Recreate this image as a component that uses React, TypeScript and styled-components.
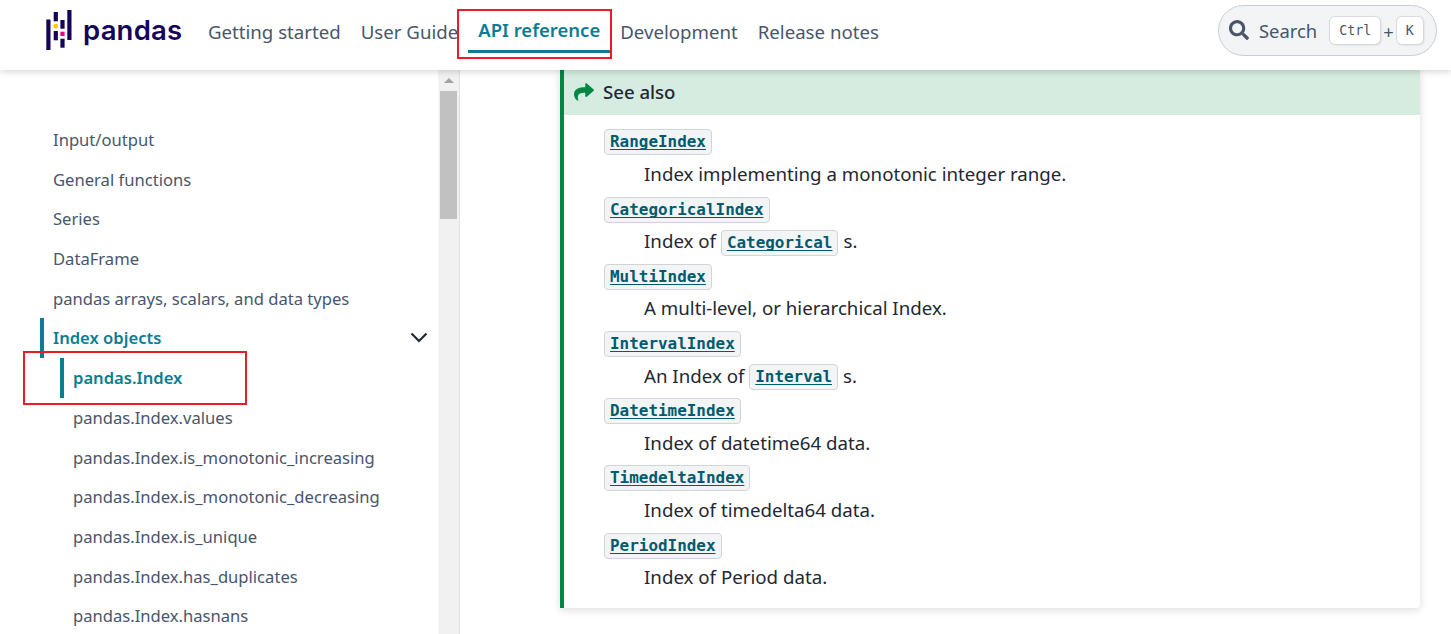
import * as React from 'react';
import styled, { createGlobalStyle } from 'styled-components';
import { FaSearch, FaShare } from 'react-icons/fa';

const GlobalStyle = createGlobalStyle`
    html, body {
        margin: 0;
        height: 100%;
        overflow: hidden;
        background: #fff;
        color: #222832;
        font-family: "Noto Sans", "Open Sans", sans-serif;
    }
`;

const Page = styled.div`
    height: 100vh;
    display: flex;
    flex-direction: column;
    overflow: hidden;
`;

const Header = styled.header`
    height: 70px;
    flex: none;
    display: flex;
    align-items: center;
    padding: 0 14px 0 46px;
    background: #fff;
    box-shadow: 0 2px 6px rgba(0, 0, 0, 0.16);
    position: relative;
    z-index: 2;
`;

const Logo = styled.div`
    display: flex;
    align-items: center;
    gap: 11px;
    width: 152px;
    height: 40px;
    margin-top: -10px;
    flex: none;
`;

const LogoText = styled.span`
    font-family: Inter, sans-serif;
    font-weight: 600;
    font-size: 27.5px;
    color: #150458;
    letter-spacing: 0.2px;
`;

const Nav = styled.nav`
    display: flex;
    align-items: center;
    margin-top: -6px;
    flex: 1;
`;

const NavItem = styled.a<{ $active?: boolean }>`
    position: relative;
    display: block;
    padding: ${p => (p.$active ? '0 10px 6px' : '0 10px')};
    font-size: ${p => (p.$active ? 18.5 : 18.65)}px;
    line-height: 28px;
    white-space: nowrap;
    font-weight: ${p => (p.$active ? 600 : 400)};
    color: ${p => (p.$active ? '#0a7d91' : '#48566b')};
    border-bottom: ${p => (p.$active ? '3px solid #0a7d91' : '0')};
    margin-top: ${p => (p.$active ? '5px' : '0')};
`;

const RedBox = styled.span<{ $top: number; $left: number; $w: number; $h: number }>`
    position: absolute;
    top: ${p => p.$top}px;
    left: ${p => p.$left}px;
    width: ${p => p.$w}px;
    height: ${p => p.$h}px;
    border: 2px solid #ed1c24;
    pointer-events: none;
`;

const SearchButton = styled.div`
    width: 219px;
    height: 51px;
    box-sizing: border-box;
    margin-top: -10px;
    display: flex;
    align-items: center;
    padding: 0 10px 0 10px;
    border: 1px solid #c9ced6;
    border-radius: 26px;
    background: #f3f4f5;
    color: #48566b;
    font-size: 18.4px;
`;

const SearchLabel = styled.span`
    margin-left: 10px;
    margin-right: 13px;
`;

const Kbd = styled.kbd`
    display: inline-flex;
    align-items: center;
    justify-content: center;
    box-sizing: border-box;
    height: 27px;
    padding: 0 9px;
    background: #fff;
    border-radius: 5px;
    box-shadow: 0 0 1px 1px #d5d9df, 1px 1px 2px rgba(0, 0, 0, 0.15);
    font-family: "DejaVu Sans Mono", monospace;
    font-size: 13.3px;
    color: #48566b;
`;

const Plus = styled.span`
    margin: 0 3px;
    font-size: 18.4px;
    padding-top: 3px;
`;

const Body = styled.div`
    flex: 1;
    display: flex;
    min-height: 0;
`;

const Sidebar = styled.aside`
    width: 460px;
    flex: none;
    box-sizing: border-box;
    border-right: 1px solid #dfe1e5;
    display: flex;
    overflow: hidden;
`;

const SideList = styled.ul`
    list-style: none;
    margin: 0;
    padding: 49.7px 0 0;
    width: 438px;
    flex: none;
`;

const SideItem = styled.li<{ $nested?: boolean; $active?: boolean }>`
    position: relative;
    height: 39.7px;
    display: flex;
    align-items: center;
    justify-content: space-between;
    box-sizing: border-box;
    padding-left: ${p => (p.$nested ? 73 : 53)}px;
    padding-right: 10px;
    font-size: 16.6px;
    font-weight: ${p => (p.$active ? 600 : 400)};
    color: ${p => (p.$active ? '#0a7d91' : '#48566b')};

    &::before {
        content: ${p => (p.$active ? "''" : 'none')};
        position: absolute;
        left: ${p => (p.$nested ? 60 : 40)}px;
        top: 0;
        bottom: 0;
        width: 4px;
        background: #0a7d91;
    }
`;

const Scrollbar = styled.div`
    width: 21px;
    flex: none;
    background: #f1f1f1;
    display: flex;
    flex-direction: column;
    align-items: center;
`;

const ScrollArrow = styled.div`
    height: 21px;
    flex: none;
    display: flex;
    align-items: center;
    justify-content: center;

    &::after {
        content: '';
        border-left: 5px solid transparent;
        border-right: 5px solid transparent;
        border-bottom: 5px solid #a3a3a3;
    }
`;

const ScrollThumb = styled.div`
    width: 17px;
    height: 128px;
    background: #c1c1c1;
`;

const Main = styled.main`
    flex: 1;
    min-width: 0;
    padding-left: 100px;
    padding-right: 31px;
`;

const Admonition = styled.section`
    border-left: 4px solid #028844;
    border-radius: 0 4px 4px 0;
    box-shadow: 0 2px 8px rgba(0, 0, 0, 0.14);
    padding-bottom: 12px;
`;

const AdmonitionTitle = styled.div`
    height: 45px;
    box-sizing: border-box;
    padding: 0 0 2px 10px;
    display: flex;
    align-items: center;
    gap: 9px;
    background: #d6ece1;
    font-size: 18.6px;
    font-weight: 500;
    color: #222832;

    svg {
        color: #028844;
    }
`;

const DefList = styled.dl`
    margin: 10.7px 0 0;
    padding-left: 40px;
`;

const Term = styled.dt`
    height: 33.6px;
    display: flex;
    align-items: center;
`;

const Desc = styled.dd`
    margin: 0 0 0 40px;
    height: 33.6px;
    box-sizing: border-box;
    padding-bottom: 5.2px;
    display: flex;
    align-items: center;
    font-size: 18.7px;
    white-space: pre;
`;

const Code = styled.code<{ $inline?: boolean }>`
    display: inline-block;
    box-sizing: border-box;
    height: 26px;
    line-height: 24px;
    padding: 0 5px;
    margin: ${p => (p.$inline ? '4px 5px 0 0' : '0')};
    background: #f3f4f5;
    border: 1px solid #d1d5da;
    border-radius: 4px;
    font-family: "DejaVu Sans Mono", monospace;
    font-size: 15.95px;
    font-weight: 700;
    color: #005b6e;
    text-decoration: underline;
    text-decoration-thickness: 1px;
    text-decoration-skip-ink: none;
    text-underline-offset: 2px;
`;

const sideItems = [
    'Input/output',
    'General functions',
    'Series',
    'DataFrame',
    'pandas arrays, scalars, and data types',
];

const nestedItems = [
    'pandas.Index.values',
    'pandas.Index.is_monotonic_increasing',
    'pandas.Index.is_monotonic_decreasing',
    'pandas.Index.is_unique',
    'pandas.Index.has_duplicates',
    'pandas.Index.hasnans',
];

function PandasLogo() {
    return (
        <svg width="26" height="40" viewBox="0 0 26 40" style={{ flex: 'none' }}>
            <rect x="0.3" y="9.5" width="4.2" height="30.5" fill="#150458" />
            <rect x="7.7" y="2" width="4.2" height="9.3" fill="#150458" />
            <rect x="7.7" y="14" width="4.2" height="4.3" fill="#ffca00" />
            <rect x="7.7" y="21" width="4.2" height="9.3" fill="#150458" />
            <rect x="14.4" y="10" width="4.2" height="8.7" fill="#150458" />
            <rect x="14.4" y="21.7" width="4.2" height="4.3" fill="#e70488" />
            <rect x="14.4" y="28.7" width="4.2" height="9" fill="#150458" />
            <rect x="21.3" y="0" width="4.2" height="30" fill="#150458" />
        </svg>
    );
}

function Chevron() {
    return (
        <svg width="18" height="11" viewBox="0 0 18 11" fill="none" stroke="#222832" strokeWidth="2.2">
            <polyline points="1.5,1.5 9,9 16.5,1.5" />
        </svg>
    );
}

export default function App() {
    return (
        <Page>
            <GlobalStyle />
            <Header>
                <Logo>
                    <PandasLogo />
                    <LogoText>pandas</LogoText>
                </Logo>
                <Nav>
                    <NavItem>Getting started</NavItem>
                    <NavItem>User Guide</NavItem>
                    <NavItem $active>
                        API reference
                        <RedBox $top={-7} $left={-11} $w={151} $h={46} />
                    </NavItem>
                    <NavItem>Development</NavItem>
                    <NavItem>Release notes</NavItem>
                </Nav>
                <SearchButton>
                    <FaSearch size={20} />
                    <SearchLabel>Search</SearchLabel>
                    <Kbd>Ctrl</Kbd>
                    <Plus>+</Plus>
                    <Kbd>K</Kbd>
                </SearchButton>
            </Header>
            <Body>
                <Sidebar>
                    <SideList>
                        {sideItems.map(item => (
                            <SideItem key={item}>{item}</SideItem>
                        ))}
                        <SideItem $active>
                            Index objects
                            <Chevron />
                        </SideItem>
                        <SideItem $nested $active>
                            pandas.Index
                            <RedBox $top={-7} $left={23} $w={220} $h={50} />
                        </SideItem>
                        {nestedItems.map(item => (
                            <SideItem $nested key={item}>{item}</SideItem>
                        ))}
                    </SideList>
                    <Scrollbar>
                        <ScrollArrow />
                        <ScrollThumb />
                    </Scrollbar>
                </Sidebar>
                <Main>
                    <Admonition>
                        <AdmonitionTitle>
                            <FaShare size={20} />
                            See also
                        </AdmonitionTitle>
                        <DefList>
                            <Term><Code>RangeIndex</Code></Term>
                            <Desc>Index implementing a monotonic integer range.</Desc>
                            <Term><Code>CategoricalIndex</Code></Term>
                            <Desc>Index of <Code $inline>Categorical</Code>s.</Desc>
                            <Term><Code>MultiIndex</Code></Term>
                            <Desc>A multi-level, or hierarchical Index.</Desc>
                            <Term><Code>IntervalIndex</Code></Term>
                            <Desc>An Index of <Code $inline>Interval</Code>s.</Desc>
                            <Term><Code>DatetimeIndex</Code></Term>
                            <Desc>Index of datetime64 data.</Desc>
                            <Term><Code>TimedeltaIndex</Code></Term>
                            <Desc>Index of timedelta64 data.</Desc>
                            <Term><Code>PeriodIndex</Code></Term>
                            <Desc>Index of Period data.</Desc>
                        </DefList>
                    </Admonition>
                </Main>
            </Body>
        </Page>
    );
}
